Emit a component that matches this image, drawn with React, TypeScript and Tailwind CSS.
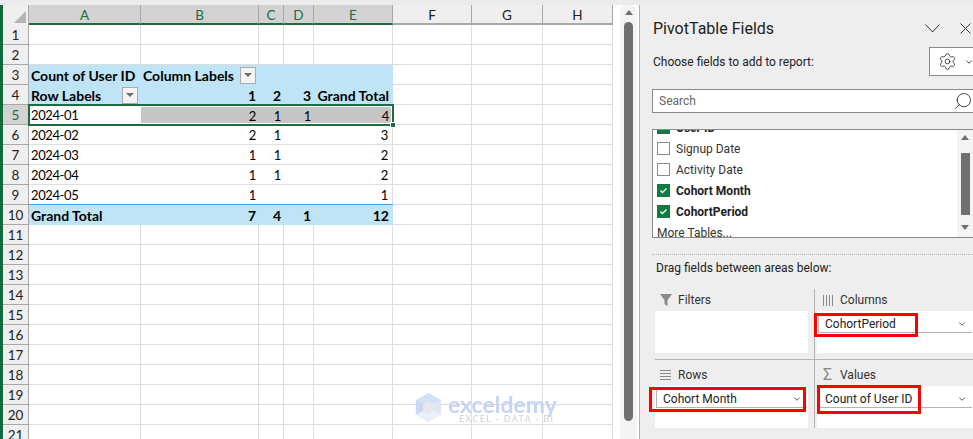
import { ChevronDown, Search, Settings } from 'lucide-react'
import type { ReactNode } from 'react'

const cols = [
  { name: 'A', w: 'w-[112px]', on: true },
  { name: 'B', w: 'w-[118px]', on: true },
  { name: 'C', w: 'w-[25px]', on: true },
  { name: 'D', w: 'w-[30px]', on: true },
  { name: 'E', w: 'w-[79px]', on: true },
  { name: 'F', w: 'w-[79px]', on: false },
  { name: 'G', w: 'w-[71px]', on: false },
  { name: 'H', w: 'w-[70px]', on: false },
]

type Row = { cells: ReactNode[]; kind?: 'blue' | 'total' | 'sel' }

const rows: Record<number, Row> = {
  3: { kind: 'blue', cells: ['Count of User ID', <Labels key="l" />] },
  4: { kind: 'blue', cells: [<RowLabels key="r" />, '1', '2', '3', 'Grand Total'] },
  5: { kind: 'sel', cells: ['2024-01', '2', '1', '1', '4'] },
  6: { cells: ['2024-02', '2', '1', '', '3'] },
  7: { cells: ['2024-03', '1', '1', '', '2'] },
  8: { cells: ['2024-04', '1', '1', '', '2'] },
  9: { cells: ['2024-05', '1', '', '', '1'] },
  10: { kind: 'total', cells: ['Grand Total', '7', '4', '1', '12'] },
}

function FilterBtn() {
  return (
    <span className="-mt-[2px] flex h-[17px] w-[16px] shrink-0 items-center justify-center border border-[#ababab] bg-[#f3f3f3]">
      <span className="h-0 w-0 border-x-[4px] border-t-[4px] border-x-transparent border-t-[#6e6e6e]" />
    </span>
  )
}

function Labels() {
  return (
    <span className="-mr-[2px] flex w-full items-center justify-between">
      <span>Column Labels</span>
      <FilterBtn />
    </span>
  )
}

function RowLabels() {
  return (
    <span className="-mr-[1px] flex w-full items-center justify-between">
      <span>Row Labels</span>
      <FilterBtn />
    </span>
  )
}

function SheetRow({ n }: { n: number }) {
  const row = rows[n]
  const bold = row?.kind === 'blue' || row?.kind === 'total'
  return (
    <div className="flex h-[20px]">
      <div
        className={`flex w-[26px] shrink-0 items-center justify-center border-r border-b border-[#a8a8a8] pt-[2px] text-[13.5px] ${
          row?.kind === 'sel' ? 'bg-[#d2d2d2] text-[#1d6b41]' : 'bg-[#efefef] text-[#222]'
        }`}
      >
        {n}
      </div>
      {cols.map((c, i) => {
        const inTable = row && i < 5
        let tone = 'border-r border-b border-[#dedede]'
        if (inTable && (row.kind === 'blue' || row.kind === 'total')) {
          tone = row.kind === 'total' ? 'bg-[#bfe4f5] border-t border-t-[#35a6e0] -mt-px h-[21px]' : 'bg-[#bfe4f5]'
        } else if (inTable && row.kind === 'sel' && i > 0) {
          tone = 'bg-[#c6c6c6]'
        } else if (inTable) {
          tone = 'border-b border-[#dedede]' + (i === 4 ? ' border-r' : '')
        }
        const value = inTable ? row.cells[i] : null
        return (
          <div
            key={c.name}
            className={`flex shrink-0 items-center pt-[2px] pl-[2px] leading-none whitespace-nowrap ${c.w} ${tone} ${
              bold ? 'text-[14px] font-bold' : 'text-[13px] tracking-[-0.4px]'
            } ${i === 4 ? 'pr-[4px]' : 'pr-[3px]'} ${i > 0 && n !== 3 ? 'justify-end' : ''}`}
          >
            {value}
          </div>
        )
      })}
    </div>
  )
}

function Sheet() {
  return (
    <div className="relative w-[613px] shrink-0 overflow-hidden bg-white font-['Lato',sans-serif] text-black">
      <div className="flex h-[20px]">
        <div className="relative w-[26px] shrink-0 border-r border-[#a8a8a8] bg-[#efefef]">
          <span className="absolute right-[2px] bottom-[2px] h-0 w-0 border-b-[12px] border-l-[12px] border-b-[#b5b5b5] border-l-transparent" />
        </div>
        {cols.map((c) => (
          <div
            key={c.name}
            className={`flex shrink-0 items-center justify-center border-r border-b-2 pt-[2px] text-[13.5px] ${c.w} ${
              c.on
                ? 'border-r-[#a8a8a8] border-b-[#1d6b41] bg-[#d2d2d2] text-[#1d6b41]'
                : 'border-r-[#a8a8a8] border-b-[#a8a8a8] bg-[#efefef] text-[#222]'
            }`}
          >
            {c.name}
          </div>
        ))}
      </div>
      {Array.from({ length: 21 }, (_, i) => (
        <SheetRow key={i} n={i + 1} />
      ))}
      {/* selection outline on row 5 */}
      <div className="absolute top-[99px] left-[25px] h-[22px] w-[366px] border-2 border-[#1d6b41] outline-1 -outline-offset-3 outline-white" />
      <div className="absolute top-[117px] left-[387px] h-[6px] w-[6px] border border-white bg-[#1d6b41]" />
      <Watermark />
    </div>
  )
}

function Watermark() {
  return (
    <div className="pointer-events-none absolute top-[387px] left-[412px] flex items-start gap-[6px] font-['Lato',sans-serif] blur-[0.4px]">
      <svg width="27" height="31" viewBox="0 0 30 34">
        <path d="M15 1 29 9v16l-14 8L1 25V9z" fill="#dfe6f8" />
        <path d="M15 1 29 9 21 13 15 10 9 13 1 9z" fill="#d5dff7" />
        <path d="M1 9l8 4v8l-8 4z" fill="#c9d7f5" />
        <path d="M9 21l6 4 6-4 8 4-14 8-14-8z" fill="#e9f0f8" />
        <path d="M15 11l6 3.500v7l-6 3.500-6-3.500v-7z" fill="#e8e8ea" />
      </svg>
      <div className="-mt-[2px] flex flex-col">
        <span className="text-[23px] leading-[28px] font-bold text-[#c6d4f5]">exceldemy</span>
        <span className="-mt-[4px] pl-[11px] text-[9px] leading-[10px] tracking-[1.300px] text-[#d0d0d0]">
          EXCEL - DATA - BI
        </span>
      </div>
    </div>
  )
}

function Gutter() {
  return (
    <div className="flex w-[23px] shrink-0 bg-white">
      <div className="ml-[4px] flex w-[17px] flex-col items-center rounded-t-md bg-[#f4f4f4]">
        <span className="mt-[5px] h-0 w-0 border-x-[4px] border-b-[5px] border-x-transparent border-b-[#707070]" />
        <span className="mt-[7px] h-[399px] w-[9px] rounded-full bg-[#707070]" />
      </div>
    </div>
  )
}

function Check({ on }: { on?: boolean }) {
  if (!on) return <span className="h-[13px] w-[13px] shrink-0 border border-[#8c8c8c] bg-white" />
  return (
    <span className="flex h-[13px] w-[13px] shrink-0 items-center justify-center bg-[#107c41]">
      <svg width="9" height="9" viewBox="0 0 9 9" fill="none">
        <path d="M1.500 4.500 3.500 6.500 7.500 2.500" stroke="#fff" strokeWidth="1.300" />
      </svg>
    </span>
  )
}

function Field({ label, on }: { label: string; on?: boolean }) {
  return (
    <div className="flex h-[21px] items-center gap-[6px] pl-[4px]">
      <Check on={on} />
      <span className={on ? 'font-bold text-[#222]' : 'text-[#333]'}>{label}</span>
    </div>
  )
}

function AreaLabel({ icon, label }: { icon: ReactNode; label: string }) {
  return (
    <div className="flex h-[20px] items-center gap-[6px] pt-[2px] pl-[4px] text-[12px] text-[#333]">
      <span className="flex w-[13px] justify-center">{icon}</span>
      {label}
    </div>
  )
}

function Pill({ label }: { label: string }) {
  return (
    <div className="mx-[1px] flex h-[20px] items-center justify-between border-b border-l border-[#b4b4b4] pt-[2px] pr-[5px] pl-[6px] text-[12px] text-[#222]">
      {label}
      <ChevronDown size={10} strokeWidth={2} className="text-[#333]" />
    </div>
  )
}

function Panel() {
  return (
    <div className="w-[334px] shrink-0 overflow-hidden border-l border-[#b0b0b0] bg-[#eeeeee] pl-[12px] font-['Roboto',sans-serif] text-[#222]">
      <div className="flex h-[37px] w-[321px] items-end justify-between pr-[2px] pl-[1px] text-[16px] leading-[26px]">
        PivotTable Fields
        <span className="mb-[8px] flex items-center gap-[20px] text-[#333]">
          <svg width="15" height="9" viewBox="0 0 15 9" fill="none" stroke="currentColor">
            <path d="M.5.5l7 7.500 7-7.500" />
          </svg>
          <svg width="11" height="11" viewBox="0 0 11 11" fill="none" stroke="currentColor">
            <path d="M.5.5l10 10M10.500.5l-10 10" />
          </svg>
        </span>
      </div>
      <div className="mt-[5px] flex h-[28px] w-[323px] items-center justify-between pt-[1px] pl-[1px] text-[12px]">
        Choose fields to add to report:
        <span className="flex h-[29px] w-[46px] items-center gap-[7px] border border-[#8a8a8a] bg-white pl-[8px]">
          <Settings size={19} strokeWidth={1} />
          <ChevronDown size={10} strokeWidth={2} />
        </span>
      </div>
      <div className="mt-[14px] flex h-[24px] w-[340px] items-center justify-between border border-[#8a8a8a] bg-white pr-[18px] pl-[6px] text-[12px] text-[#666]">
        Search
        <Search size={20} strokeWidth={1} className="-scale-x-100 text-[#222]" />
      </div>
      <div className="mt-[16px] flex h-[109px] w-[322px] overflow-hidden border border-[#8a8a8a] bg-white text-[12px]">
        <div className="-mt-[13px] flex-1">
          <Field label="User ID" on />
          <Field label="Signup Date" />
          <Field label="Activity Date" />
          <Field label="Cohort Month" on />
          <Field label="CohortPeriod" on />
          <div className="flex h-[21px] items-center pl-[4px] text-[#333]">More Tables...</div>
        </div>
        <div className="flex w-[16px] flex-col items-center bg-[#f4f4f4]">
          <span className="mt-[5px] h-0 w-0 border-x-[4px] border-b-[5px] border-x-transparent border-b-[#707070]" />
          <span className="mt-[13px] h-[62px] w-[9px] bg-[#707070]" />
          <span className="mt-[10px] h-0 w-0 border-x-[4px] border-t-[5px] border-x-transparent border-t-[#707070]" />
        </div>
      </div>
      <div className="mt-[16px] h-0 border-t border-dotted border-[#b0b0b0]" />
      <div className="mt-[3px] h-[20px] pl-[4px] text-[12px] leading-[20px]">Drag fields between areas below:</div>
      <div className="mt-[11px] ml-[3px] grid w-[318px] grid-cols-[160px_1fr] grid-rows-[71px_68px]">
        <div className="border-r border-b border-[#b4b4b4] pr-[6px]">
          <AreaLabel
            label="Filters"
            icon={
              <svg width="12" height="12" viewBox="0 0 12 12">
                <path d="M0 0h12L7.500 6v6l-3-2V6z" fill="#8a8a8a" />
              </svg>
            }
          />
          <div className="mt-[2px] h-[42px] bg-white" />
        </div>
        <div className="border-b border-[#b4b4b4] pl-[2px]">
          <AreaLabel
            label="Columns"
            icon={
              <svg width="10" height="11" viewBox="0 0 10 11">
                <path d="M.5 0v11M3.500 0v11M6.500 0v11M9.500 0v11" stroke="#8a8a8a" />
              </svg>
            }
          />
          <div className="mt-[2px] h-[42px] bg-white pt-[2px]">
            <Pill label="CohortPeriod" />
          </div>
        </div>
        <div className="border-r border-[#b4b4b4] pt-[4px] pr-[6px]">
          <AreaLabel
            label="Rows"
            icon={
              <svg width="11" height="10" viewBox="0 0 11 10">
                <path d="M0 .5h11M0 3.500h11M0 6.500h11M0 9.500h11" stroke="#8a8a8a" />
              </svg>
            }
          />
          <div className="mt-[2px] h-[42px] bg-white pt-[2px]">
            <Pill label="Cohort Month" />
          </div>
        </div>
        <div className="pt-[4px] pl-[2px]">
          <AreaLabel icon={<span className="text-[16px] leading-none text-[#8a8a8a]">Σ</span>} label="Values" />
          <div className="mt-[2px] h-[42px] bg-white pt-[2px]">
            <Pill label="Count of User ID" />
          </div>
        </div>
      </div>
    </div>
  )
}

function RedBoxes() {
  return (
    <>
      <div className="absolute top-[313px] left-[814px] h-[24px] w-[104px] border-[3px] border-[#ff0000]" />
      <div className="absolute top-[387px] left-[649px] h-[25px] w-[157px] border-[3px] border-[#ff0000]" />
      <div className="absolute top-[385px] left-[817px] h-[29px] w-[104px] border-[3px] border-[#ff0000]" />
    </>
  )
}

export default function App() {
  return (
    <div className="relative h-[439px] w-[973px] overflow-hidden bg-[#e9ebec]">
      <div className="mt-[5px] flex h-[434px]">
        <div className="w-[3px] shrink-0 bg-[#0f6b3d]" />
        <Sheet />
        <Gutter />
        <Panel />
      </div>
      <RedBoxes />
    </div>
  )
}
